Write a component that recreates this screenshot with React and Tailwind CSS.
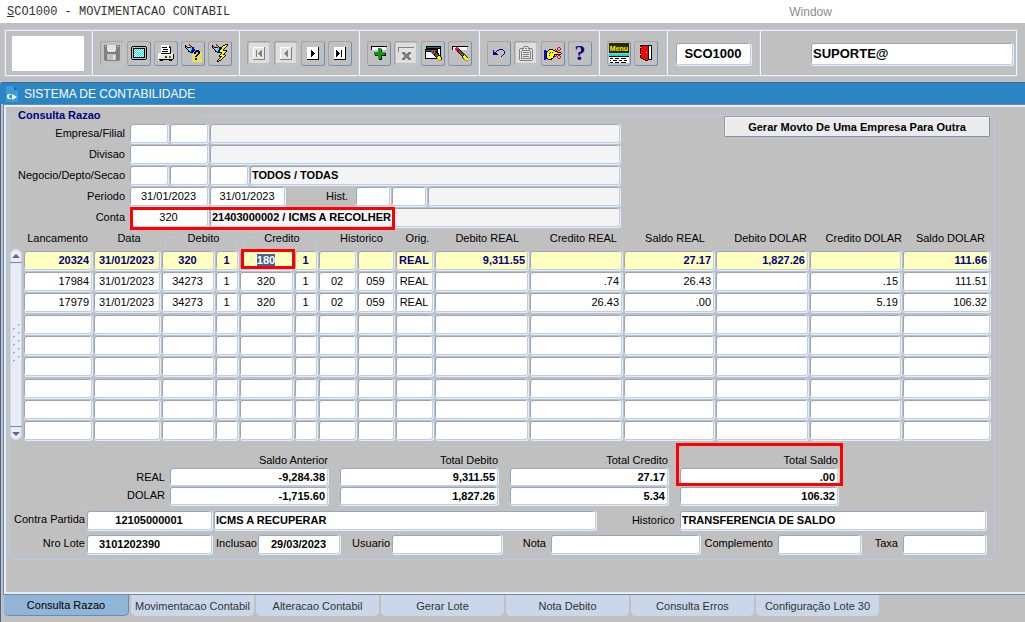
import { useEffect, useRef } from "react";
import clsx from "clsx";

const PALETTE = {
    K: "#000000",
    W: "#ffffff",
    G: "#808080",
    L: "#c0c0c0",
    S: "#e4e4e4",
    C: "#00ffff",
    T: "#008080",
    Y: "#ffff00",
    O: "#a0a000",
    R: "#ff0000",
    M: "#ff00c0",
    N: "#00a010",
    B: "#0000ff",
    V: "#000080",
};

const ICONS = {
    save: [
        "GGGSSSSSSSSSGGGG",
        "GLGSSSSSSSSSGLLG",
        "GGGSSSSSSSSSGGGG",
        "GGGSSSSSSSSSGGGG",
        "GGGSSSSSSSSSGGGG",
        "GGGSSSSSSSSSGGGG",
        "GGGGSSSSSSSGGGGG",
        "GGGGGGGGGGGGGGGG",
        "GGGGGGGGGGGGGGGG",
        "GGGLLLLLLLLLGGGG",
        "GGGLLLLLLSSLGGGG",
        "GGGLLLLLLSSLGGGG",
        "GGGLLLLLLSSLGGGG",
        "GGGLLLLLLSSLGGGG",
        "GGGLLLLLLSSLGGGG",
        ".GGGGGGGGGGGGGG.",
    ],
    screen: [
        ".KKKKKKKKKKKKKK.",
        "KLLLLLLLLLLLLLLK",
        "KLKKKKKKKKKKKKLK",
        "KLKCWCWCWCWCWKLK",
        "KLKWCWCWCWCWCKLK",
        "KLKCWCWCWCWCWKLK",
        "KLKWCWCWCWCWCKLK",
        "KLKCWCWCWCWCWKLK",
        "KLKWCWCWCWCWCKLK",
        "KLKCWCWCWCWCWKLK",
        "KLKWCWCWCWCWCKLK",
        "KLKKKKKKKKKKKKLK",
        "KLLLLLLLLLLLLLLK",
        ".KKKKKKKKKKKKKK.",
    ],
    print: [
        "...WWWWWWWW.....",
        "...WWWWWWWWK....",
        "...WKKKKKWWKK...",
        "...WWWWWWWWWK...",
        "...WWKKKKKWWK...",
        "...WWWWWWWWWK...",
        "...WKKKKKKWWK...",
        "...WWWWWWWWWK...",
        ".WWKKKKKKKKKKWW.",
        "WWWWWWWWWWWWWWWK",
        "WSSSSSSSSSSSSSSK",
        "WSSSSSSRRYYNNSSK",
        "WSSSSSSBBYYNNSSK",
        "WSSSSSSSSSSSSSSK",
        ".KKKKKKKKKKKKKK.",
        "..KKK......KKK..",
    ],
    query: [
        "....R............",
        "K...RR...........",
        "KK....K..........",
        "KLKKKKCBK........",
        ".KLLWCCBB........",
        "..KLLCCBBK.......",
        "...KLCBBBK.KKK...",
        "...KKCBBK.KKKKK..",
        ".....KKK.KK..KKY.",
        ".........KK..KKYY",
        "........Y.Y.KKY.Y",
        ".......Y.Y.KKY.Y.",
        "........Y.KKY.Y.Y",
        ".......Y.Y.Y.Y.Y.",
        "........Y.KKY.Y.Y",
        ".......Y.YKKY.YY.",
        "........Y.Y.YY.YY",
        ".......Y.Y.Y.YYY.",
    ],
    execute: [
        "....R........KKK.",
        "K...RR.....KKYYK.",
        "KK....K...KYYYK..",
        "KLKKKKCBKKYYYK...",
        ".KLLWCCBBKYYK....",
        "..KLLCCBKYYK.....",
        "...KLCBKYYYKKKK..",
        "...KKCBKYYYYYYK..",
        ".....KKKKKYYYK...",
        ".........KYYK....",
        "........KYYKK....",
        ".......KYYYYYK...",
        ".......KKKYYK....",
        "........KYYK.....",
        ".......KYYK......",
        "......KYYK.......",
        ".....KYKK........",
        ".....KK..........",
    ],
    first: [
        "WWWWWWWWWWWG",
        "WSSSSSSSSSSG",
        "WSSSSSSSSSSG",
        "WSSGSSSSGSSG",
        "WSSGSSSGGSSG",
        "WSSGSSGGGSSG",
        "WSSGSGGGGSSG",
        "WSSGSSGGGSSG",
        "WSSGSSSGGSSG",
        "WSSGSSSSGSSG",
        "WSSSSSSSSSSG",
        "WSSSSSSSSSSG",
        "GGGGGGGGGGGG",
    ],
    previous: [
        "WWWWWWWWWWWG",
        "WSSSSSSSSSSG",
        "WSSSSSSSSSSG",
        "WSSSSSSGSSSG",
        "WSSSSSGGSSSG",
        "WSSSSGGGSSSG",
        "WSSSGGGGSSSG",
        "WSSSSGGGSSSG",
        "WSSSSSGGSSSG",
        "WSSSSSSGSSSG",
        "WSSSSSSSSSSG",
        "WSSSSSSSSSSG",
        "GGGGGGGGGGGG",
    ],
    next: [
        "WWWWWWWWWWWK",
        "WWWWWWWWWWWK",
        "WWWWWWWWWWWK",
        "WWWWKWWWWWWK",
        "WWWWKKWWWWWK",
        "WWWWKKKWWWWK",
        "WWWWKKKKWWWK",
        "WWWWKKKWWWWK",
        "WWWWKKWWWWWK",
        "WWWWKWWWWWWK",
        "WWWWWWWWWWWK",
        "WWWWWWWWWWWK",
        "KKKKKKKKKKKK",
    ],
    last: [
        "WWWWWWWWWWWK",
        "WWWWWWWWWWWK",
        "WWWWWWWWWWWK",
        "WWKWWWWKWWWK",
        "WWKKWWWKWWWK",
        "WWKKKWWKWWWK",
        "WWKKKKWKWWWK",
        "WWKKKWWKWWWK",
        "WWKKWWWKWWWK",
        "WWKWWWWKWWWK",
        "WWWWWWWWWWWK",
        "WWWWWWWWWWWK",
        "KKKKKKKKKKKK",
    ],
    insert: [
        "KKKKKKKKKKKKKKKK",
        "KWWWWWWWWWWWWWWL",
        "KWWWWWWNNNWWWWWL",
        "KWWWWWWNNNKWWWWL",
        "LLLLLLLNNNKLLLLL",
        ".......NNNK.....",
        "...NNNNNNNNNNN..",
        "...NNNNNNNNNNNK.",
        "...NNNNNNNNNNNK.",
        "....KKKNNNKKKKK.",
        ".......NNNK.....",
        ".......NNNK.....",
        ".......NNNK.....",
        "........KKK.....",
    ],
    remove: [
        "GGGGGGGGGGGGGGGG",
        "GSSSSSSSSSSSSSSS",
        "GSSSSSSSSSSSSSSS",
        "GSSSSSSSSSSSSSSS",
        "GSSSSSSSSSSSSSSS",
        "....GGG...GGG...",
        "....GGGG.GGGG...",
        ".....GGGGGGG....",
        "......GGGGG.....",
        "......GGGGG.....",
        ".....GGGGGGG....",
        "....GGGG.GGGG...",
        "....GGG...GGG...",
    ],
    clearForm: [
        ".KKKKKKKKKKKKKKK.",
        ".KTTTTTTTTTTTTTK.",
        ".KKKKKKKKKKKKKKK.",
        "KKKKKKKKKKKKKWWK.",
        "KTTTTTTMMTTTKWWK.",
        "KKKKKKMMRNKKKWWK.",
        "KWWWWWMRRNNKKWWK.",
        "KWWWWWWRNNKRKKWK.",
        "KWWWWWWWNKRRNKWK.",
        "KWWWWWWWWKRNNKKK.",
        "KWWWWWWWWWKNKYYK.",
        "KWWWWWWWWWWKYYYYK",
        "KKKKKKKKKKKKOYYYK",
        ".............OYYK",
        "..............OO.",
    ],
    clearItem: [
        "KKKKKKKKKKKKKKKK",
        "KWWWMMWWWWWWWWWL",
        "KWWMMRRWWWWWWWWL",
        "KWWMRRRKWWWWWWWL",
        "LLLLRRKNKLLLLLLL",
        ".....KNNRK......",
        "......KRRRK.....",
        ".......KRRNK....",
        "........KNNNK...",
        ".........KNKYK..",
        "..........KYYYK.",
        "..........KYYYYK",
        "...........KYYYY",
        "............OYYY",
        ".............OOO",
    ],
    undo: [
        "......VVVV..",
        "V...VV....V.",
        "V..V.......V",
        "VVV........V",
        "VVVV.......V",
        "VVVVV.....V.",
        ".........V..",
        "........V...",
    ],
    clipboard: [
        ".....GGGG.....",
        "....GSSSSG....",
        ".GGGGSGGSGGGG.",
        "GSSGSSSSSSGSSG",
        "GSSGGGGGGGGSSG",
        "GSGSSSSSSSSGSG",
        "GSGSGGGGGGSGSG",
        "GSGSSSSSSSSGSG",
        "GSGSGGGGGGSGSG",
        "GSGSSSSSSSSGSG",
        "GSGSGGGGGGSGSG",
        "GSGSSSSSSSSGSG",
        "GSGGGGGGGGGGSG",
        "GSSSSSSSSSSSSG",
        ".GGGGGGGGGGGG.",
    ],
    hand: [
        "..............RR..",
        ".............R..R.",
        ".....KKKK..R.R..R.",
        "BB..KYYYYKK.R.RR..",
        "BBKKYYYYYYYKKR....",
        "BBKYYYKYKYYYYKKKK.",
        "BBKYYKYYYYYYYYYYYK",
        "BBKYYYYYYYKKKKKKK.",
        "BBKYYKYYYYK.R.RR..",
        "BBKYYYYYYKKR.R..R.",
        "BBKYYYYYYK...R..R.",
        "BBKKYYYKK.....RR..",
        "BB..KKKK..........",
    ],
    exit: [
        "KKKKKKKKKKKK",
        "KRRRRRRRKWWK",
        "YRRRRRRRKWWK",
        "KRRRRRRRKWWK",
        "KRRRRRRRKWWK",
        "KRRRRRRRKWWK",
        "KRRRRRRRKWWK",
        "KRRRRRYRKWWK",
        "KRRRRRRRKWWK",
        "YRRRRRRRKWWK",
        "KRRRRRRRKWWK",
        "KRRRRRRRKWWK",
        "KRRRRRRRKWWK",
        ".KKRRRRRKWWK",
        "...KKRRRKKKK",
        ".....KKK....",
    ],
};

function PixelIcon({ name }) {
    const rows = ICONS[name];
    const width = Math.max(...rows.map((row) => row.length));
    return (
        <svg width={width} height={rows.length} shapeRendering="crispEdges" aria-hidden="true">
            {rows.flatMap((row, y) =>
                [...row].map((key, x) =>
                    PALETTE[key] ? (
                        <rect key={`${x}-${y}`} x={x} y={y} width="1" height="1" fill={PALETTE[key]} />
                    ) : null
                )
            )}
        </svg>
    );
}

function MenuIcon() {
    return (
        <svg width="20" height="20" shapeRendering="crispEdges" aria-hidden="true">
            <rect width="20" height="10" fill="#2a2a00" />
            <text
                x="10"
                y="8"
                textAnchor="middle"
                className="font-['Liberation_Sans',sans-serif] text-[7px] font-bold"
                fill="#ffff00"
            >
                Menu
            </text>
            <rect y="11" width="20" height="2" fill="#00e0e0" />
            <rect y="13" width="20" height="7" fill="#fff" />
            <path
                d="M0 13h20v1H0zM1 15h3v1H1zM6 15h4v1H6zM12 15h5v1h-5zM1 17h1v1H1zM4 17h4v1H4zM10 17h3v1h-3zM15 17h3v1h-3zM1 19h3v1H1zM6 19h4v1H6zM12 19h5v1h-5z"
                fill="#000"
            />
        </svg>
    );
}

const TOOL_GROUPS = [
    [
        { icon: "save", label: "Salvar", disabled: true },
        { icon: "screen", label: "Tela" },
        { icon: "print", label: "Imprimir" },
        { icon: "query", label: "Entrar consulta" },
        { icon: "execute", label: "Executar consulta" },
    ],
    [
        { icon: "first", label: "Primeiro", disabled: true, shaded: true },
        { icon: "previous", label: "Anterior", disabled: true, shaded: true },
        { icon: "next", label: "Proximo" },
        { icon: "last", label: "Ultimo" },
    ],
    [
        { icon: "insert", label: "Inserir" },
        { icon: "remove", label: "Remover", disabled: true, shaded: true },
        { icon: "clearForm", label: "Limpar tela" },
        { icon: "clearItem", label: "Limpar item" },
    ],
    [
        { icon: "undo", label: "Desfazer" },
        { icon: "clipboard", label: "Colar", disabled: true, shaded: true },
        { icon: "hand", label: "Recortar" },
        { icon: "help", label: "Ajuda" },
    ],
    [
        { icon: "menu", label: "Menu" },
        { icon: "exit", label: "Sair" },
    ],
];

const DIVIDER = "border-l border-[#bccde3] shadow-[inset_1px_0_#eef3fa]";

function ToolButton({ icon, label, disabled, shaded }) {
    return (
        <button
            type="button"
            aria-label={label}
            disabled={disabled}
            className={clsx(
                "flex h-[25px] w-6 items-center justify-center rounded-[3px] border border-t-[#a4a4a8] border-l-[#a4a4a8]",
                disabled ? "border-r-[#b9cade] border-b-[#b9cade]" : "border-r-[#6f90b4] border-b-[#6f90b4]"
            )}
        >
            <span
                className={clsx("flex h-5 w-5 items-center justify-center", shaded && "bg-[#dedede]")}
            >
                {icon === "help" && (
                    <span className="font-['Liberation_Serif',serif] text-[22px] leading-5 font-bold text-[#000080]">
                        ?
                    </span>
                )}
                {icon === "menu" && <MenuIcon />}
                {ICONS[icon] && <PixelIcon name={icon} />}
            </span>
        </button>
    );
}

function Field({ label, className, readOnly, ...props }) {
    return (
        <input
            type="text"
            aria-label={props.id ? undefined : label}
            readOnly={readOnly}
            className={clsx(
                "block min-w-0 rounded-[3px] border border-t-[#b4c2d6] border-r-[#bccfe6] border-b-[#bccfe6] border-l-[#b4c2d6] px-0.5 text-black outline-none",
                "shadow-[inset_1px_1px_#a2a4aa,1px_1px_#e6edf7]",
                readOnly ? "bg-[#f4f4f4]" : "bg-white",
                className
            )}
            {...props}
        />
    );
}

const ROW_LABEL = "w-[116px] shrink-0 text-right";
const HIGHLIGHT = "pointer-events-none absolute border-3 border-[#ff0000]";

function Filters() {
    return (
        <div className="flex items-start justify-between pr-1">
            <div className="flex max-w-[611px] flex-1 flex-col gap-px">
                <div className="flex items-center gap-1">
                    <label htmlFor="empresa" className={ROW_LABEL}>Empresa/Filial</label>
                    <div className="flex flex-1 gap-px">
                        <Field id="empresa" className="h-5 w-[39px]" />
                        <Field label="Filial" className="h-5 w-[39px]" />
                        <Field label="Nome da empresa" readOnly className="h-5 flex-1" />
                    </div>
                </div>
                <div className="flex items-center gap-1">
                    <label htmlFor="divisao" className={ROW_LABEL}>Divisao</label>
                    <div className="flex flex-1 gap-px">
                        <Field id="divisao" className="h-5 w-[79px]" />
                        <Field label="Nome da divisao" readOnly className="h-5 flex-1" />
                    </div>
                </div>
                <div className="flex items-center gap-1">
                    <label htmlFor="negocio" className={ROW_LABEL}>Negocio/Depto/Secao</label>
                    <div className="flex flex-1 gap-px">
                        <Field id="negocio" className="h-5 w-[39px]" />
                        <Field label="Depto" className="h-5 w-[39px]" />
                        <Field label="Secao" className="h-5 w-[39px]" />
                        <Field
                            label="Descricao"
                            readOnly
                            defaultValue="TODOS / TODAS"
                            className="h-5 flex-1 font-bold"
                        />
                    </div>
                </div>
                <div className="flex items-center gap-1">
                    <label htmlFor="periodo" className={ROW_LABEL}>Periodo</label>
                    <div className="flex flex-1 items-center gap-px">
                        <Field id="periodo" defaultValue="31/01/2023" className="h-5 w-[79px] text-center" />
                        <Field label="Periodo final" defaultValue="31/01/2023" className="h-5 w-[76px] text-center" />
                        <label htmlFor="hist" className="w-[68px] pr-1.5 text-right">Hist.</label>
                        <Field id="hist" className="h-5 w-[35px]" />
                        <Field label="Hist. complemento" className="h-5 w-[35px]" />
                        <Field label="Descricao do historico" readOnly className="h-5 flex-1" />
                    </div>
                </div>
                <div className="flex items-center gap-1">
                    <label htmlFor="conta" className={ROW_LABEL}>Conta</label>
                    <div className="relative flex flex-1 gap-px">
                        <Field id="conta" defaultValue="320" className="h-5 w-[79px] text-center" />
                        <Field
                            label="Descricao da conta"
                            readOnly
                            defaultValue="21403000002 / ICMS A RECOLHER"
                            className="h-5 flex-1 font-bold"
                        />
                        <div className={clsx(HIGHLIGHT, "top-0 left-px h-[23px] w-[265px]")} />
                    </div>
                </div>
            </div>
            <button
                type="button"
                className="-mt-[7px] h-[21px] w-[266px] rounded-[2px] border border-t-[#98989c] border-r-[#7893b3] border-b-[#7893b3] border-l-[#98989c] bg-[#ebebeb] font-bold text-black shadow-[inset_1px_1px_#f8f8f8]"
            >
                Gerar Movto De Uma Empresa Para Outra
            </button>
        </div>
    );
}

const COLUMNS = [
    { label: "Lancamento", width: "w-[70px]", align: "text-right" },
    { label: "Data", width: "w-[68px]", align: "text-center" },
    { label: "Debito", width: "w-[54px]", align: "text-center" },
    { label: "Debito seq.", width: "w-[24px]", align: "text-center" },
    { label: "Credito", width: "w-[55px]", align: "text-center" },
    { label: "Credito seq.", width: "w-[24px]", align: "text-center" },
    { label: "Historico", width: "w-[39px]", align: "text-center" },
    { label: "Historico compl.", width: "w-[38px]", align: "text-center" },
    { label: "Orig.", width: "w-[39px]", align: "text-center" },
    { label: "Debito REAL", width: "w-[95px]", align: "text-right", head: "pr-2.5" },
    { label: "Credito REAL", width: "w-[94px]", align: "text-right", head: "pr-1.5" },
    { label: "Saldo REAL", width: "w-[92px]", align: "text-right", head: "pr-2.5" },
    { label: "Debito DOLAR", width: "w-[94px]", align: "text-right", head: "pr-0.5" },
    { label: "Credito DOLAR", width: "w-[93px]", align: "text-right", head: "pr-0" },
    { label: "Saldo DOLAR", width: "w-[89px]", align: "text-right", head: "pr-1.5" },
];

const ENTRIES = [
    ["20324", "31/01/2023", "320", "1", "180", "1", "", "", "REAL", "9,311.55", "", "27.17", "1,827.26", "", "111.66"],
    ["17984", "31/01/2023", "34273", "1", "320", "1", "02", "059", "REAL", "", ".74", "26.43", "", ".15", "111.51"],
    ["17979", "31/01/2023", "34273", "1", "320", "1", "02", "059", "REAL", "", "26.43", ".00", "", "5.19", "106.32"],
    [],
    [],
    [],
    [],
    [],
    [],
];

function BracketHead({ children }) {
    return (
        <th colSpan={2} className="p-0 font-normal">
            <div className="flex h-[22px] items-end justify-between pr-0.5 pl-1">
                <span className="h-3 w-[15px] rounded-tl-[4px] border-t border-l border-[#b3cae8]" />
                <span className="self-center">{children}</span>
                <span className="h-3 w-[10px] rounded-tr-[4px] border-t border-r border-[#b3cae8]" />
            </div>
        </th>
    );
}

function ScrollBar() {
    return (
        <div className="mt-[22px] mb-px ml-px flex w-3 shrink-0 flex-col items-stretch justify-between overflow-hidden rounded-full bg-[#e8edf5] shadow-[inset_0_0_0_1px_#c9d6e6]">
            <button
                type="button"
                aria-label="Rolar para cima"
                className="flex h-3.5 items-center justify-center border-b border-[#7388a8]"
            >
                <svg width="8" height="4" aria-hidden="true">
                    <path d="M0 4L4 0L8 4Z" fill="#66677a" />
                </svg>
            </button>
            <svg width="12" height="44" shapeRendering="crispEdges" className="self-center" aria-hidden="true">
                {[0, 1, 2, 3, 4].map((i) => (
                    <g key={i}>
                        <path d={`M8 ${i * 8 + 1}h2v1h-1v1h-1zM3 ${i * 8 + 5}h2v1h-1v1h-1z`} fill="#9db0cb" />
                        <path d={`M9 ${i * 8 + 2}h1v1h-1zM4 ${i * 8 + 6}h1v1h-1z`} fill="#ffffff" />
                    </g>
                ))}
            </svg>
            <button
                type="button"
                aria-label="Rolar para baixo"
                className="flex h-3.5 items-center justify-center border-t border-[#7388a8]"
            >
                <svg width="8" height="4" aria-hidden="true">
                    <path d="M0 0L4 4L8 0Z" fill="#66677a" />
                </svg>
            </button>
        </div>
    );
}

function EntriesTable() {
    const wrapper = useRef(null);

    // the credit account of the current record starts out selected
    useEffect(() => {
        wrapper.current.querySelector("[data-current]").select();
    }, []);

    return (
        <div ref={wrapper} className="flex pr-[3px]">
            <ScrollBar />
            <table className="ml-px h-[214px] flex-1 table-fixed border-collapse">
                <colgroup>
                    {COLUMNS.map((column) => (
                        <col key={column.label} className={column.width} />
                    ))}
                </colgroup>
                <thead>
                    <tr className="h-[22px]">
                        <th className="p-0 pr-px font-normal">Lancamento</th>
                        <th className="p-0 pl-1 font-normal">Data</th>
                        <BracketHead>Debito</BracketHead>
                        <BracketHead>Credito</BracketHead>
                        <th colSpan={2} className="p-0 pl-2.5 font-normal">Historico</th>
                        <th className="p-0 pl-1.5 font-normal">Orig.</th>
                        {COLUMNS.slice(9).map((column) => (
                            <th
                                key={column.label}
                                className={clsx("p-0 text-right font-normal whitespace-nowrap", column.head)}
                            >
                                {column.label}
                            </th>
                        ))}
                    </tr>
                </thead>
                <tbody>
                    {ENTRIES.map((entry, row) => (
                        <tr key={row}>
                            {COLUMNS.map((column, index) => {
                                const current = row === 0 && index === 4;
                                return (
                                    <td key={column.label} className={clsx("p-0 pr-px", current && "relative")}>
                                        <Field
                                            label={`${column.label} ${row + 1}`}
                                            defaultValue={entry[index] ?? ""}
                                            data-current={current ? "" : undefined}
                                            className={clsx(
                                                "h-5 w-full selection:bg-[#44648e] selection:text-white",
                                                column.align,
                                                row === 0 && "bg-[#ffffc0]! font-bold text-[#000080]!"
                                            )}
                                        />
                                        {current && (
                                            <div className={clsx(HIGHLIGHT, "top-0 left-0.5 h-5 w-[54px]")} />
                                        )}
                                    </td>
                                );
                            })}
                        </tr>
                    ))}
                </tbody>
            </table>
        </div>
    );
}

const TOTALS = [
    { label: "Saldo Anterior", real: "-9,284.38", dolar: "-1,715.60" },
    { label: "Total Debito", real: "9,311.55", dolar: "1,827.26" },
    { label: "Total Credito", real: "27.17", dolar: "5.34" },
    { label: "Total Saldo", real: ".00", dolar: "106.32", highlighted: true },
];

function Totals() {
    return (
        <div className="mt-3 flex">
            <div className="w-[160px] shrink-0 pt-[15px] pr-1 text-right leading-[18px]">
                <div>REAL</div>
                <div>DOLAR</div>
            </div>
            <div className="flex gap-[11px]">
                {TOTALS.map((total) => (
                    <div key={total.label} className="relative w-[159px]">
                        <div className="h-3.5 text-right leading-[14px]">{total.label}</div>
                        <Field
                            label={`${total.label} REAL`}
                            defaultValue={total.real}
                            className="h-[19px] w-full text-right font-bold"
                        />
                        <Field
                            label={`${total.label} DOLAR`}
                            defaultValue={total.dolar}
                            className="h-[19px] w-full text-right font-bold"
                        />
                        {total.highlighted && (
                            <div className={clsx(HIGHLIGHT, "-top-[10px] -right-[5px] -left-[3px] h-[43px]")} />
                        )}
                    </div>
                ))}
            </div>
        </div>
    );
}

function Details() {
    return (
        <div className="mt-[5px] flex flex-col gap-1 pr-2">
            <div className="flex items-center">
                <label htmlFor="contra" className="w-[77px] shrink-0 pr-px pb-[3px] text-right">Contra Partida</label>
                <Field id="contra" defaultValue="12105000001" className="h-5 w-[126px] text-center font-bold" />
                <Field
                    label="Descricao da contra partida"
                    defaultValue="ICMS A RECUPERAR"
                    className="ml-px h-5 flex-5 font-bold"
                />
                <label htmlFor="historico" className="w-[83px] shrink-0 pr-1 text-right">Historico</label>
                <Field
                    id="historico"
                    defaultValue="TRANSFERENCIA DE SALDO"
                    className="h-5 flex-4 font-bold"
                />
            </div>
            <div className="flex items-center">
                <label htmlFor="lote" className="w-[77px] shrink-0 pr-px pb-[3px] text-right">Nro Lote</label>
                <Field id="lote" defaultValue="3101202390" className="h-5 w-[126px] pl-3! font-bold" />
                <label htmlFor="inclusao" className="w-[45px] pb-[3px] text-right">Inclusao</label>
                <Field id="inclusao" defaultValue="29/03/2023" className="h-5 w-[83px] text-center font-bold" />
                <label htmlFor="usuario" className="w-[51px] pr-px pb-[3px] text-right">Usuario</label>
                <Field id="usuario" className="h-5 w-[111px]" />
                <label htmlFor="nota" className="w-[48px] pr-1 pb-[3px] text-right">Nota</label>
                <Field id="nota" className="h-5 flex-1" />
                <label htmlFor="complemento" className="w-[77px] pr-1 pb-[3px] text-right">Complemento</label>
                <Field id="complemento" className="h-5 w-[84px]" />
                <label htmlFor="taxa" className="w-[41px] pr-1 pb-[3px] text-right">Taxa</label>
                <Field id="taxa" className="h-5 w-[84px]" />
            </div>
        </div>
    );
}

const TABS = [
    "Consulta Razao",
    "Movimentacao Contabil",
    "Alteracao Contabil",
    "Gerar Lote",
    "Nota Debito",
    "Consulta Erros",
    "Configuração Lote 30",
];

export default function App() {
    return (
        <div className="flex min-h-screen flex-col bg-[#c0c0c0] font-['Liberation_Sans',Arial,sans-serif] text-[11px] leading-4 text-black">
            <header className="flex h-[23px] items-center bg-white">
                <h1 className="w-[77%] pl-[7px] font-['Liberation_Mono',monospace] text-[12px] text-[#333]">
                    <span className="underline">S</span>CO1000 - MOVIMENTACAO CONTABIL
                </h1>
                <span className="text-[12px] text-[#8c8c8c]">Window</span>
            </header>

            <div className="mx-1 mt-1.5 mr-[7px] mb-[5px] flex h-12 items-stretch border border-[#bccde3] shadow-[inset_0_0_0_1px_#eef3fa]">
                <div className="flex w-[86px] shrink-0 items-center pl-[7px]">
                    <div className="h-[35px] w-[72px] bg-white" />
                </div>
                {TOOL_GROUPS.map((group, index) => (
                    <div key={index} className={clsx("flex shrink-0 items-center gap-[3px] pr-1.5 pl-2", DIVIDER)}>
                        {group.map((tool) => (
                            <ToolButton key={tool.icon} {...tool} />
                        ))}
                    </div>
                ))}
                <div className={clsx("ml-0.5 flex items-center px-2", DIVIDER)}>
                    <Field
                        label="Modulo"
                        defaultValue="SCO1000"
                        className="h-[23px] w-[76px] text-center text-[13px] font-bold"
                    />
                </div>
                <div className={clsx("flex flex-1 items-center pr-1 pl-[50px]", DIVIDER)}>
                    <Field
                        label="Usuario conectado"
                        defaultValue="SUPORTE@"
                        className="h-[23px] flex-1 text-[13px] font-bold"
                    />
                </div>
            </div>

            <div className="flex h-[22px] items-center gap-1.5 rounded-tl-[3px] border-t border-[#46658f] bg-[#2b84c4] pl-[5px]">
                <svg width="13" height="16" aria-hidden="true">
                    <path d="M1 0h8l4 4v12h-12z" fill="#3f9adb" />
                    <path d="M9 0v4h4z" fill="#1f6ca8" />
                    <path d="M6 8H4L2 9v3l2 1h2v-1H4v-3h2zM7 8l5 3L7 14z" fill="#fff" />
                </svg>
                <h2 className="text-[12px] text-white">SISTEMA DE CONTABILIDADE</h2>
            </div>

            <div className="flex-1 border-l border-[#46658f] pl-0.5">
                <main className="border-t border-b border-l border-[#7189ab]">
                    <div className="border-t-2 border-b-2 border-l-2 border-[#e9eef6] pr-[30px] pb-8 pl-0.5">
                        <fieldset className="min-w-0 rounded-[4px] border border-[#b3cae8] pb-[5px]">
                            <legend className="ml-2 w-[184px] pl-px text-[11px] font-bold text-[#000080]">
                                Consulta Razao
                            </legend>
                            <Filters />
                            <EntriesTable />
                            <Totals />
                            <Details />
                        </fieldset>
                    </div>
                </main>
                <nav className="flex gap-0.5 pl-px">
                    {TABS.map((tab, index) => (
                        <button
                            key={tab}
                            type="button"
                            className={clsx(
                                "h-[21px] rounded-b-[5px] whitespace-nowrap",
                                index === 0
                                    ? "w-[125px] border-r border-b border-[#6a8bb3] bg-[#91b5d7] text-black"
                                    : "w-[123px] bg-[#cad7e9] text-[#333]"
                            )}
                        >
                            {tab}
                        </button>
                    ))}
                </nav>
            </div>
        </div>
    );
}
